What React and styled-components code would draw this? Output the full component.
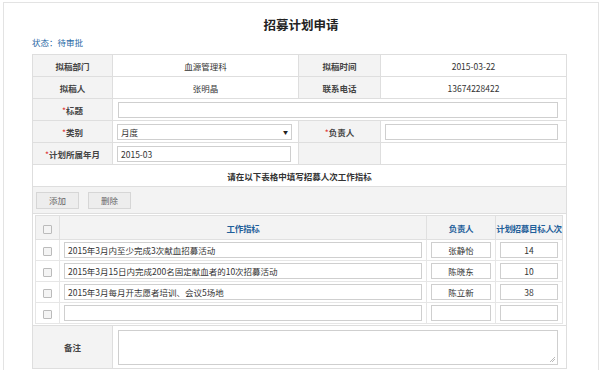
import React from "react";
import styled, { createGlobalStyle } from "styled-components";

const Global = createGlobalStyle`
  body { margin: 0; background: #fff; font-family: "Noto Sans CJK SC", "Liberation Sans", sans-serif; }
`;

const Frame = styled.div`
  margin: 2px 5px 0 3px;
  height: 380px;
  border: 1px solid #e3e3e3;
  border-bottom: none;
  box-sizing: border-box;
  overflow: hidden;
`;
const Title = styled.div`
  text-align: center;
  font-size: 12.5px;
  font-weight: bold;
  color: #222;
  padding-top: 12px;
  height: 19px;
  line-height: 19px;
`;
const Status = styled.div`
  margin: 2px 0 0 28px;
  font-size: 8.5px;
  color: #2a6aa6;
  height: 13px;
  line-height: 13px;
`;
const Table = styled.table`
  margin: 5px 0 0 28px;
  width: 534px;
  border-collapse: collapse;
  table-layout: fixed;
  font-size: 8.5px;
  color: #333;
`;
const Label = styled.td`
  background: #f3f3f3;
  border: 1px solid #dedede;
  text-align: center;
  font-weight: bold;
  color: #444;
  height: 21px;
  padding: 0;
`;
const Star = styled.span`
  color: #d33;
  font-weight: normal;
`;
const Cell = styled.td`
  background: ${(p) => (p.$gray ? "#f3f3f3" : "#fff")};
  border: 1px solid #dedede;
  text-align: ${(p) => (p.$center ? "center" : "left")};
  height: 21px;
  padding: ${(p) => p.$pad || "0 4px"};
  font-weight: ${(p) => (p.$bold ? "bold" : "normal")};
`;
const Input = styled.div`
  box-sizing: border-box;
  height: 16px;
  width: 100%;
  border: 1px solid #cfcfcf;
  background: #fff;
  font-size: 8.5px;
  line-height: 14px;
  padding: 0 3px;
  color: #333;
  text-align: ${(p) => (p.$center ? "center" : "left")};
  white-space: nowrap;
  overflow: hidden;
`;
const Select = styled(Input)`
  display: flex;
  justify-content: space-between;
  align-items: center;
  &::after { content: "▼"; font-size: 5px; color: #222; }
`;
const Btn = styled.span`
  display: inline-block;
  box-sizing: border-box;
  width: 43px;
  height: 17px;
  line-height: 15px;
  text-align: center;
  border: 1px solid #d6d6d6;
  background: #ededed;
  color: #666;
  margin-right: 9px;
`;
const Inner = styled.table`
  width: 100%;
  border-collapse: collapse;
  table-layout: fixed;
  font-size: 8.5px;
`;
const Th = styled.th`
  background: #f3f3f3;
  border: 1px solid #e0e0e0;
  color: #1f5f9a;
  font-weight: 600;
  text-align: center;
  white-space: nowrap;
  letter-spacing: -0.3px;
  height: 23px;
  padding: 0;
`;
const Td = styled.td`
  border: 1px solid #e6e6e6;
  height: 20px;
  padding: 0 4px;
  text-align: center;
`;
const Check = styled.span`
  display: inline-block;
  width: 7px;
  height: 7px;
  border: 1px solid #bbb;
  border-radius: 1px;
  background: #f4f4f4;
  vertical-align: middle;
`;
const Area = styled.div`
  box-sizing: border-box;
  height: 35px;
  border: 1px solid #cfcfcf;
  position: relative;
  &::after {
    content: "";
    position: absolute;
    right: 2px;
    bottom: 2px;
    width: 5px;
    height: 5px;
    background: linear-gradient(135deg, transparent 45%, #bbb 45%, #bbb 55%, transparent 55%, transparent 70%, #bbb 70%, #bbb 80%, transparent 80%);
  }
`;

const rows = [
  ["2015年3月内至少完成3次献血招募活动", "张静怡", "14"],
  ["2015年3月15日内完成200名固定献血者的10次招募活动", "陈晓东", "10"],
  ["2015年3月每月开志愿者培训、会议5场地", "陈立新", "38"],
  ["", "", ""],
];

export default function App() {
  return (
    <>
      <Global />
      <Frame>
        <Title>招募计划申请</Title>
        <Status>状态：待审批</Status>
        <Table>
          <colgroup>
            <col style={{ width: 80 }} />
            <col style={{ width: 186 }} />
            <col style={{ width: 82 }} />
            <col style={{ width: 186 }} />
          </colgroup>
          <tbody>
            <tr>
              <Label>拟稿部门</Label>
              <Cell $center>血源管理科</Cell>
              <Label>拟稿时间</Label>
              <Cell $center>2015-03-22</Cell>
            </tr>
            <tr>
              <Label>拟稿人</Label>
              <Cell $center>张明晶</Cell>
              <Label>联系电话</Label>
              <Cell $center>13674228422</Cell>
            </tr>
            <tr>
              <Label><Star>*</Star>标题</Label>
              <Cell colSpan={3} $pad="0 8px 0 5px"><Input /></Cell>
            </tr>
            <tr>
              <Label><Star>*</Star>类别</Label>
              <Cell $pad="0 6px 0 4px"><Select>月度</Select></Cell>
              <Label><Star>*</Star>负责人</Label>
              <Cell $pad="0 8px 0 4px"><Input /></Cell>
            </tr>
            <tr>
              <Label><Star>*</Star>计划所属年月</Label>
              <Cell $pad="0 7px 0 4px"><Input>2015-03</Input></Cell>
              <Cell $gray />
              <Cell />
            </tr>
            <tr>
              <Cell colSpan={4} $center $bold>请在以下表格中填写招募人次工作指标</Cell>
            </tr>
            <tr>
              <Cell colSpan={4} $gray $pad="2px 3px" style={{ height: 22 }}>
                <Btn>添加</Btn>
                <Btn>删除</Btn>
              </Cell>
            </tr>
            <tr>
              <Cell colSpan={4} $pad="1px 3px 1px 2px">
                <Inner>
                  <colgroup>
                    <col style={{ width: 24 }} />
                    <col />
                    <col style={{ width: 69 }} />
                    <col style={{ width: 67 }} />
                  </colgroup>
                  <thead>
                    <tr>
                      <Th><Check /></Th>
                      <Th>工作指标</Th>
                      <Th>负责人</Th>
                      <Th>计划招募目标人次</Th>
                    </tr>
                  </thead>
                  <tbody>
                    {rows.map((r, i) => (
                      <tr key={i}>
                        <Td><Check /></Td>
                        <Td><Input>{r[0]}</Input></Td>
                        <Td><Input $center>{r[1]}</Input></Td>
                        <Td><Input $center>{r[2]}</Input></Td>
                      </tr>
                    ))}
                  </tbody>
                </Inner>
              </Cell>
            </tr>
            <tr>
              <Label style={{ height: 42 }}>备注</Label>
              <Cell colSpan={3} $pad="3px 8px 3px 5px"><Area /></Cell>
            </tr>
          </tbody>
        </Table>
      </Frame>
    </>
  );
}
